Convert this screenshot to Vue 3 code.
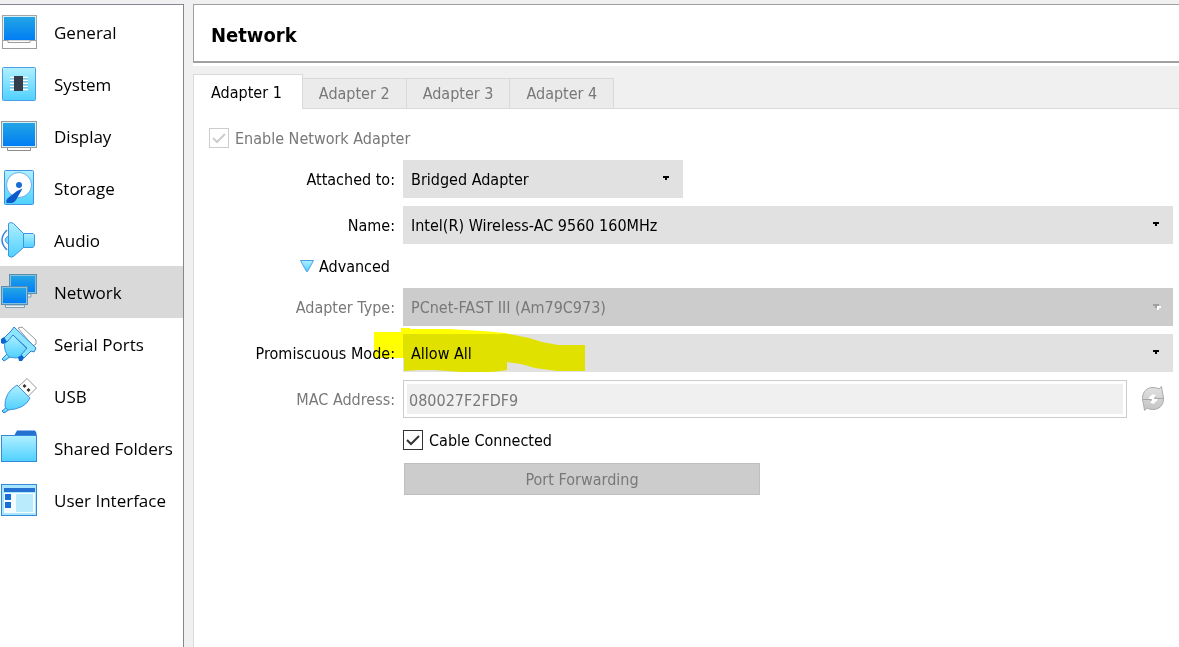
<template>
  <div class="settings">
    <svg class="defs" width="0" height="0" aria-hidden="true">
      <defs>
        <linearGradient id="screen" x1="0" y1="0" x2="0" y2="1">
          <stop offset="0" stop-color="#23a5e4" />
          <stop offset="1" stop-color="#007df5" />
        </linearGradient>
        <linearGradient id="sky" x1="0" y1="0" x2="0" y2="1">
          <stop offset="0" stop-color="#b0f0ff" />
          <stop offset="1" stop-color="#4fd0ff" />
        </linearGradient>
        <linearGradient id="silver" x1="0" y1="0" x2="0" y2="1">
          <stop offset="0" stop-color="#e2e2e2" />
          <stop offset="1" stop-color="#c4c4c4" />
        </linearGradient>
      </defs>
    </svg>

    <!-- Categories -->
    <nav class="sidebar">
      <button
        v-for="item in categories"
        :key="item.id"
        type="button"
        class="category"
        :class="{ selected: item.id === current }"
        @click="current = item.id"
      >
        <svg class="category-icon" viewBox="0 0 38 36" aria-hidden="true">
          <g v-if="item.id === 'general'">
            <rect x="2.5" y="26.5" width="34" height="8" fill="#fff" stroke="#9c9c9c" />
            <rect x="2.5" y="1.5" width="34" height="25" fill="#d5eef8" stroke="#a3a3a3" />
            <rect x="4" y="3" width="31" height="23" fill="url(#screen)" />
            <path d="M8 26.5V28.5H30V26.5" fill="#fff" stroke="#9c9c9c" />
          </g>
          <g v-else-if="item.id === 'system'">
            <rect x="2.5" y="1.5" width="33" height="33" rx="1" fill="url(#sky)" stroke="#4c9fe4" />
            <path d="M10 11.5H28M10 14.5H28M10 17.5H28M10 20.5H28M10 23.5H28" stroke="#fff" stroke-width="1.5" />
            <path d="M10 12.7H28M10 15.7H28M10 18.7H28M10 21.7H28" stroke="#69a9c8" stroke-width=".7" />
            <rect x="14" y="10" width="9" height="15" fill="#353d4b" />
          </g>
          <g v-else-if="item.id === 'display'">
            <path d="M7.5 29V32.5H30.5V29" fill="#fff" stroke="#8d8d8d" />
            <rect x="1.5" y="3.5" width="35" height="26" fill="#d5eef8" stroke="#999" />
            <rect x="3" y="5" width="32" height="23" fill="url(#screen)" />
          </g>
          <g v-else-if="item.id === 'storage'">
            <rect x="4.5" y=".5" width="29" height="34" rx="1" fill="url(#sky)" stroke="#3f94e2" />
            <circle cx="19" cy="15" r="12.5" fill="#fff" stroke="#4a9fe6" stroke-width=".8" />
            <circle cx="19" cy="15" r="3" fill="#1a6bd2" />
            <path d="M22.5 18.5L17 21 8 28Q5 31 7 33H12Q15 32 16 30Z" fill="#0d5bcb" />
          </g>
          <g v-else-if="item.id === 'audio'">
            <path d="M7 8Q-3 18 7 28" fill="none" stroke="#3b86dc" stroke-width="1.5" />
            <path d="M9 13.5Q1 18 9 22.5" fill="#79d8fb" stroke="#4a97e0" />
            <path d="M8.5 1.5Q11 -.5 13.5 1.5L23.5 11.5V25.5L13.5 34.5Q11 36 8.5 34Z" fill="url(#sky)" stroke="#3f94e2" />
            <path d="M23.5 11.5H33L34.5 13V23.5L33 25.5H23.5Z" fill="url(#sky)" stroke="#3f94e2" />
          </g>
          <g v-else-if="item.id === 'network'">
            <path d="M16 20H31V23H16Z" fill="#e9f4fa" stroke="#829bab" />
            <rect x="9.5" y=".5" width="27" height="19" fill="#84bfdf" stroke="#5b8fae" />
            <rect x="11" y="2" width="24" height="16" fill="url(#screen)" />
            <path d="M5.5 31H24.5V33.5H5.5Z" fill="#e9f4fa" stroke="#829bab" />
            <rect x="1.5" y="12.5" width="26" height="18" fill="#84bfdf" stroke="#5b8fae" />
            <rect x="3" y="14" width="23" height="15" fill="url(#screen)" />
          </g>
          <g v-else-if="item.id === 'serial'" stroke-linejoin="round">
            <path d="M18 2L22 1 36 14 36 18 33 20Z" fill="#fff" stroke="#999" />
            <path d="M7 28L2 33 4 35 10 31Z" fill="url(#sky)" stroke="#2c83d8" />
            <path d="M12 8L28 24 23 31Q16 33 9 31Q3 25 5 15Z" fill="url(#sky)" stroke="#3f94e2" />
            <path d="M11 5L14 1 36 22 34 26 31 25 24 32 21 29 27 22 13 9 7 16 3 13Z" fill="#8ce4fd" stroke="#2c83d8" />
            <path d="M1 13L4 11 7 16 3 18 1 17ZM18 31L22 29 24 32 22 35H19Z" fill="#0c63d2" />
          </g>
          <g v-else-if="item.id === 'usb'" stroke-linejoin="round">
            <path d="M18 9L27 .5 36.5 10 28 18.5Z" fill="#fff" stroke="#999" />
            <path d="M22.5 8L24.5 6 26.5 8 24.5 10ZM26.5 12L28.5 10 30.5 12 28.5 14Z" fill="#333" />
            <path d="M8 28L2 33 4 35 10 31Z" fill="url(#sky)" stroke="#2c83d8" />
            <path d="M17 7L30 20Q25 31 8 32L5 29Q4 15 17 7Z" fill="url(#sky)" stroke="#3f94e2" />
          </g>
          <g v-else-if="item.id === 'folders'">
            <path d="M14 6L17 .5H35L36.5 3V9H14Z" fill="#2571d2" />
            <rect x="1.5" y="5.5" width="35" height="26" fill="url(#sky)" stroke="#3489d9" />
          </g>
          <g v-else>
            <rect x="1.5" y="2.5" width="35" height="31" fill="#a7e6fc" stroke="#3489d9" />
            <rect x="4" y="6" width="31" height="4" fill="#2571d2" />
            <rect x="4" y="11" width="31" height="20" fill="#f3fcff" />
            <path d="M5 12h6v6H5ZM5 20h6v6H5Z" fill="#1b6fd8" />
            <rect x="16" y="12" width="17" height="18" fill="#b9ebfc" />
          </g>
        </svg>
        <span>{{ item.label }}</span>
      </button>
    </nav>

    <main class="content">
      <header class="title">
        <h1>Network</h1>
      </header>

      <div class="tabs" role="tablist">
        <button
          v-for="n in 4"
          :key="n"
          type="button"
          role="tab"
          class="tab"
          :class="{ active: n === adapter }"
          :aria-selected="n === adapter"
          @click="adapter = n"
        >Adapter {{ n }}</button>
      </div>

      <section class="pane">
        <label class="check disabled">
          <input v-model="enabled" type="checkbox" disabled>
          <svg class="tick" viewBox="0 0 20 20" aria-hidden="true"><path d="M4 10L8 14 16 6" /></svg>
          <span>Enable Network Adapter</span>
        </label>

        <div class="form">
          <template v-for="field in fields" :key="field.id">
            <label :for="field.id" class="caption" :class="{ disabled: field.disabled }">{{ field.label }}</label>
            <div class="combo" :class="{ short: field.short }">
              <select :id="field.id" :disabled="field.disabled">
                <option>{{ field.value }}</option>
              </select>
              <svg class="arrow" viewBox="0 0 8 6" aria-hidden="true">
                <path v-if="field.disabled" d="M4 2H8V4H6V6H4Z" fill="#fff" />
                <path d="M0 0H6V2H4V4H2V2H0Z" :fill="field.disabled ? '#9f9f9f' : '#000'" />
              </svg>
              <svg v-if="field.marked" class="marker" viewBox="0 0 212 46" aria-hidden="true">
                <path d="M0 4H27V0H36V1H74L109 3 131 5 155 10 168 14 184 17H211V43H183L161 40 147 36 133 34V42L127 43 117 44H86L74 43 60 42H45L30 43V30H0Z" fill="#ff0" />
              </svg>
            </div>
            <div v-if="field.id === 'name'" class="advanced-row">
              <button type="button" class="advanced">
                <svg viewBox="0 0 14 12" aria-hidden="true"><path d="M.5 .5H13.5L7.5 11.5H6.5Z" fill="url(#sky)" stroke="#4d9de6" /></svg>
                <span>Advanced</span>
              </button>
            </div>
          </template>

          <label for="mac" class="caption disabled">MAC Address:</label>
          <div class="mac-row">
            <input id="mac" v-model="mac" type="text" class="mac" disabled>
            <button type="button" class="refresh" aria-label="Generate MAC address" disabled>
              <svg viewBox="0 0 24 26" aria-hidden="true">
                <path d="M1.5 12.500C1.500 5.500 6 1.500 12 1.500Q15.500 1.500 18 3L20.500 .5 21.500 7Q22.500 9.500 22.500 13C22.500 19.500 18 23.500 12 23.500Q8.500 23.500 6 22L3.500 24.500 2.500 18Q1.500 15.500 1.500 12.500Z" fill="url(#silver)" stroke="#ababab" />
                <path d="M11 8L15 9 13.500 12H17Q16.500 15.500 13.500 16.500L13 18 9 16.500 10.500 14H7.500Q7.500 10.500 10.500 9.500Z" fill="#fff" />
                <path d="M2 13.500H10.500L9.500 15.500M22 12.500H13.500L14.500 10.500" fill="none" stroke="#a5a5a5" />
              </svg>
            </button>
          </div>

          <label class="check cable">
            <input v-model="cable" type="checkbox">
            <svg class="tick" viewBox="0 0 20 20" aria-hidden="true"><path d="M4 10L8 14 16 6" /></svg>
            <span>Cable Connected</span>
          </label>
          <button type="button" class="forwarding" disabled>Port Forwarding</button>
        </div>
      </section>
    </main>
  </div>
</template>

<script setup>
import { ref } from 'vue'

const current = ref('network')
const adapter = ref(1)
const enabled = ref(true)
const cable = ref(true)
const mac = ref('080027F2FDF9')

const categories = [
  { id: 'general', label: 'General' },
  { id: 'system', label: 'System' },
  { id: 'display', label: 'Display' },
  { id: 'storage', label: 'Storage' },
  { id: 'audio', label: 'Audio' },
  { id: 'network', label: 'Network' },
  { id: 'serial', label: 'Serial Ports' },
  { id: 'usb', label: 'USB' },
  { id: 'folders', label: 'Shared Folders' },
  { id: 'interface', label: 'User Interface' }
]

const fields = [
  { id: 'attached', label: 'Attached to:', value: 'Bridged Adapter', short: true },
  { id: 'name', label: 'Name:', value: 'Intel(R) Wireless-AC 9560 160MHz' },
  { id: 'type', label: 'Adapter Type:', value: 'PCnet-FAST III (Am79C973)', disabled: true },
  { id: 'promiscuous', label: 'Promiscuous Mode:', value: 'Allow All', marked: true }
]
</script>

<style>
body {
  margin: 0;
  background: #f0f0f0;
}
</style>

<style scoped>
.settings {
  display: flex;
  gap: 9px;
  min-height: 100vh;
  padding-top: 4px;
  box-sizing: border-box;
  background: #f0f0f0;
  color: #000;
  font-family: "DejaVu Sans Condensed", "Noto Sans", sans-serif;
  font-size: 16px;
  line-height: 20px;
}

.defs {
  position: absolute;
}

button,
input,
select {
  font: inherit;
  color: inherit;
  border-radius: 0;
}

button {
  border: none;
  background: none;
  padding: 0;
}

.sidebar {
  flex: none;
  width: 184px;
  box-sizing: border-box;
  padding-top: 1px;
  background: #fff;
  border-top: 1px solid #828790;
  border-right: 1px solid #828790;
}

.category {
  display: flex;
  align-items: center;
  gap: 16px;
  width: 100%;
  height: 52px;
  font-family: "Open Sans", "Noto Sans", sans-serif;
  font-size: 17px;
  white-space: nowrap;
  text-align: left;
}

.category.selected {
  background: #d9d9d9;
}

.category-icon {
  flex: none;
  width: 38px;
  height: 36px;
}

.category span,
.check span,
.advanced span,
.caption {
  padding-top: 2px;
}

.content {
  flex: 1;
  min-width: 0;
  display: flex;
  flex-direction: column;
}

.title {
  padding: 20px 17px 16px;
  background: #fff;
  border-top: 1px solid #a0a0a0;
  border-left: 1px solid #a0a0a0;
  border-bottom: 2px solid #a0a0a0;
  box-shadow: 0 3px #fff;
}

.title h1 {
  margin: 0;
  font-size: 20px;
  line-height: 20px;
  font-weight: 700;
}

.tabs {
  display: flex;
  align-items: flex-end;
  margin-top: 11px;
}

.tabs::after {
  content: "";
  flex: 1;
  border-bottom: 1px solid #d9d9d9;
}

.tab {
  height: 31px;
  padding: 0 16px;
  border: 1px solid #d9d9d9;
  border-left: none;
  background: #ebebeb;
  color: #787878;
}

.tab.active {
  height: 35px;
  padding: 2px 20px 0 17px;
  border-left: 1px solid #d9d9d9;
  border-bottom: none;
  background: #fff;
  color: #000;
}

.pane {
  flex: 1;
  padding: 18px 6px 20px 15px;
  background: #fff;
  border-left: 1px solid #d9d9d9;
}

.form {
  display: grid;
  grid-template-columns: 186px minmax(0, 1fr);
  align-items: center;
  gap: 8px;
  margin-top: 11px;
}

.caption {
  text-align: right;
  white-space: nowrap;
}

.disabled {
  color: #787878;
}

.combo {
  position: relative;
  height: 38px;
}

.combo.short {
  width: 280px;
}

.combo select {
  appearance: none;
  width: 100%;
  height: 100%;
  padding: 2px 32px 0 8px;
  border: none;
  background: #e1e1e1;
}

.combo select:disabled {
  background: #ccc;
  color: #787878;
  opacity: 1;
}

.arrow {
  position: absolute;
  right: 12px;
  top: 16px;
  width: 8px;
  height: 6px;
  pointer-events: none;
}

.marker {
  position: absolute;
  left: -29px;
  top: -6px;
  width: 212px;
  height: 46px;
  mix-blend-mode: multiply;
  pointer-events: none;
}

.advanced-row {
  grid-column: 1 / -1;
}

.advanced {
  display: flex;
  align-items: center;
  justify-content: flex-end;
  gap: 5px;
  width: 186px;
  height: 28px;
  padding-right: 5px;
}

.advanced svg {
  width: 14px;
  height: 12px;
}

.mac-row {
  display: flex;
  align-items: center;
  gap: 14px;
  padding-right: 8px;
}

.mac {
  flex: 1;
  min-width: 0;
  height: 38px;
  box-sizing: border-box;
  padding: 5px 5px 3px;
  border: 1px solid #ccc;
  background: #f0f0f0;
  box-shadow: inset 0 0 0 3px #fff;
  color: #787878;
}

.refresh {
  display: flex;
}

.refresh svg {
  width: 24px;
  height: 26px;
}

.check {
  position: relative;
  display: flex;
  align-items: center;
  gap: 6px;
}

.check input {
  appearance: none;
  width: 20px;
  height: 20px;
  margin: 0;
  border: 1px solid #333;
  background: #fff;
}

.check.disabled input {
  border-color: #ccc;
}

.tick {
  position: absolute;
  left: 0;
  width: 20px;
  height: 20px;
  fill: none;
  stroke: #333;
  stroke-width: 2;
  pointer-events: none;
  visibility: hidden;
}

.check input:checked + .tick {
  visibility: visible;
}

.check.disabled .tick {
  stroke: #ccc;
}

.check.cable {
  grid-column: 2;
  height: 28px;
}

.forwarding {
  grid-column: 2;
  width: 356px;
  height: 32px;
  margin: 1px;
  padding-top: 2px;
  border: 1px solid #bfbfbf;
  background: #ccc;
  color: #787878;
}
</style>
